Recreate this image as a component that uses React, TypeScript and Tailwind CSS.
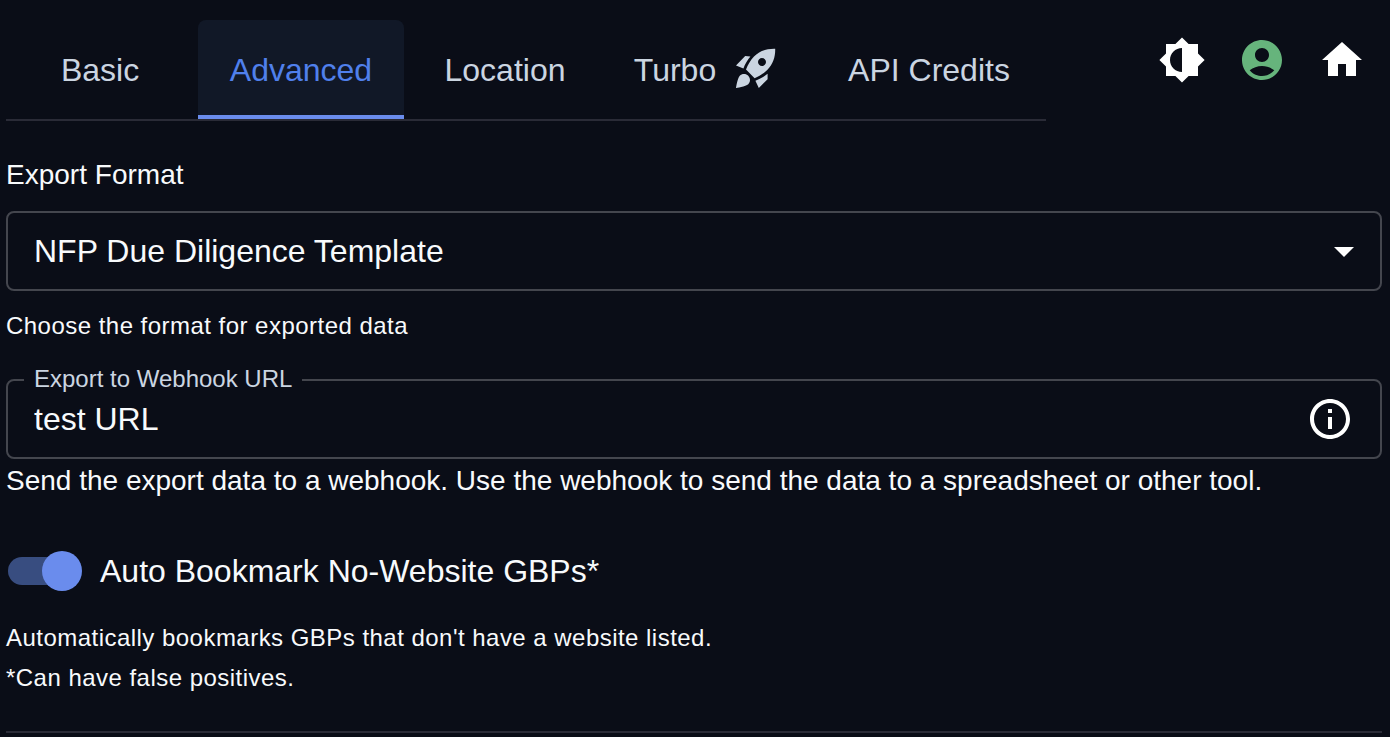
import React from 'react';

type IconProps = { className?: string };

const BrightnessIcon: React.FC<IconProps> = ({ className }) => (
  <svg className={className} viewBox="0 0 24 24" fill="currentColor">
    <path d="M4 15.31L.69 12 4 8.69V4h4.69L12 .69 15.31 4H20v4.69L23.31 12 20 15.31V20h-4.69L12 23.31 8.69 20H4v-4.69zM12 18V6c-3.31 0-6 2.69-6 6s2.69 6 6 6z" />
  </svg>
);

const AccountIcon: React.FC<IconProps> = ({ className }) => (
  <svg className={className} viewBox="0 0 24 24" fill="currentColor">
    <path d="M12 2C6.48 2 2 6.48 2 12s4.48 10 10 10 10-4.48 10-10S17.52 2 12 2zm0 4c1.93 0 3.5 1.57 3.5 3.5S13.93 13 12 13s-3.5-1.57-3.5-3.5S10.07 6 12 6zm0 14c-2.03 0-4.43-.82-6.14-2.88C7.55 15.8 9.68 15 12 15s4.45.8 6.14 2.12C16.43 19.18 14.03 20 12 20z" />
  </svg>
);

const HomeIcon: React.FC<IconProps> = ({ className }) => (
  <svg className={className} viewBox="0 0 24 24" fill="currentColor">
    <path d="M10 20v-6h4v6h5v-8h3L12 3 2 12h3v8z" />
  </svg>
);

const RocketIcon: React.FC<IconProps> = ({ className }) => (
  <svg className={className} viewBox="0 0 24 24" fill="currentColor">
    <path d="M2 10.7L6.6 6l2.6.3C7.7 8 6.5 10.2 5.7 12.3zM11.3 17.1L7 12.7C8 10.2 9.3 8.1 11 6.3 14 3.3 17.6 2.3 21.6 2.4c.1 4-1 7.6-4 10.6-1.8 1.7-3.9 3.1-6.3 4.1zM17.8 14.9v2.7L13.4 22l-1.7-3.6c2.2-.9 4.3-2 6.1-3.5zM9 18c0 .83-.34 1.58-.88 2.12C6.94 21.3 2 22 2 22s.7-4.94 1.88-6.12C4.42 15.34 5.17 15 6 15c1.66 0 3 1.34 3 3zm4-9c0 1.1.9 2 2 2s2-.9 2-2-.9-2-2-2-2 .9-2 2z" fillRule="evenodd" />
  </svg>
);

const InfoIcon: React.FC<IconProps> = ({ className }) => (
  <svg className={className} viewBox="0 0 24 24" fill="currentColor">
    <path d="M11 7h2v2h-2zm0 4h2v6h-2zm1-9C6.48 2 2 6.48 2 12s4.48 10 10 10 10-4.48 10-10S17.52 2 12 2zm0 18c-4.41 0-8-3.59-8-8s3.59-8 8-8 8 3.59 8 8-3.59 8-8 8z" />
  </svg>
);

const tabs = [
  { label: 'Basic', width: 'mr-1 w-[188px]' },
  { label: 'Advanced', width: 'w-[206px]', active: true },
  { label: 'Location', width: 'w-[202px]' },
  { label: 'Turbo', width: 'w-[202px]', icon: true },
  { label: 'API Credits', width: 'ml-2 w-[226px]' },
];

const Header: React.FC = () => (
  <header className="flex h-[121px] justify-between">
    <nav className="flex w-[1040px] items-end border-b-2 border-[#2a2b37]">
      {tabs.map((tab) => (
        <button
          key={tab.label}
          className={`flex h-[99px] items-center justify-center border-b-4 text-[32px] leading-10 ${tab.width} ${
            tab.active
              ? 'rounded-t-lg border-[#6a8ced] bg-[#111827] text-[#5080ec]'
              : 'border-transparent text-[#cbd5e1]'
          }`}
        >
          <span className="pt-1">{tab.label}</span>
          {tab.icon && <RocketIcon className="ml-4 h-12 w-12" />}
        </button>
      ))}
    </nav>
    <div className="flex gap-8 pr-4 pt-9 text-white">
      <BrightnessIcon className="h-12 w-12" />
      <AccountIcon className="h-12 w-12 text-[#66b47c]" />
      <HomeIcon className="h-12 w-12" />
    </div>
  </header>
);

export default function App() {
  return (
    <div className="h-[737px] w-[1390px] overflow-hidden bg-[#0a0d17] pl-1.5 pr-2 font-['Liberation_Sans',Arial,sans-serif] text-[#f8fafc]">
      <Header />

      <label className="mt-[34px] block text-[28px] leading-10 tracking-[0.01px]">Export Format</label>
      <div className="mt-4 flex h-20 items-center justify-between rounded-lg border-2 border-[#44464e] pl-[26px] pr-3">
        <span className="text-[32px] leading-[46px]">NFP Due Diligence Template</span>
        <svg className="h-12 w-12 text-white" viewBox="0 0 24 24" fill="currentColor">
          <path d="M7 10l5 5 5-5z" />
        </svg>
      </div>
      <p className="mt-[15px] text-2xl leading-10 tracking-[0.47px]">Choose the format for exported data</p>

      {/* legend cuts the gap in the outline */}
      <fieldset className="mt-5 h-[93px] rounded-lg border-2 border-[#44464e] pl-4 pr-[26px]">
        <legend className="h-7 px-2.5 text-2xl leading-[26px] text-[#cbd5e1]">Export to Webhook URL</legend>
        <div className="flex h-[50px] items-center justify-between pl-2.5">
          <span className="text-[32px] leading-[46px]">test URL</span>
          <InfoIcon className="h-12 w-12 text-white" />
        </div>
      </fieldset>
      <p className="mt-0.5 text-[28px] leading-10">
        Send the export data to a webhook. Use the webhook to send the data to a spreadsheet or other tool.
      </p>

      <div className="mt-[50px] flex h-10 items-center">
        <div className="ml-0.5 flex h-7 w-[68px] items-center justify-end rounded-full bg-[#384d80]">
          <span className="-mr-1.5 h-10 w-10 shrink-0 rounded-full bg-[#6a8ced]" />
        </div>
        <span className="ml-6 text-[32px] leading-10">Auto Bookmark No-Website GBPs*</span>
      </div>

      <p className="mt-[27px] text-2xl leading-10 tracking-[0.47px]">
        Automatically bookmarks GBPs that don't have a website listed.
        <br />
        *Can have false positives.
      </p>
      <hr className="mt-[33px] border-t-2 border-[#2a2b37]" />
    </div>
  );
}
